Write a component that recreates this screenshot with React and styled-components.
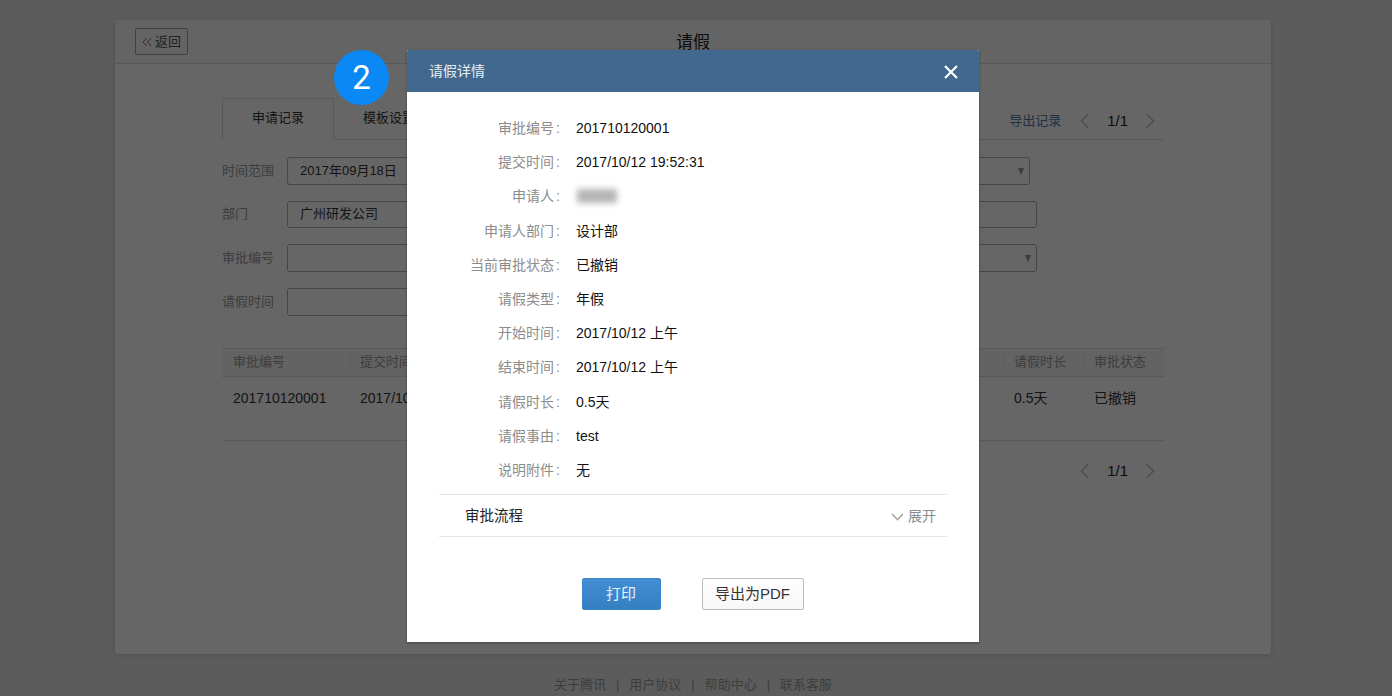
import React from 'react';
import styled, { createGlobalStyle } from 'styled-components';

const GlobalStyle = createGlobalStyle`
    html, body {
        margin: 0;
        height: 100%;
        overflow: hidden;
        background: #e6e6e6;
    }
    body {
        font-family: "Liberation Sans", "Noto Sans CJK SC", sans-serif;
        line-height: 20px;
        color: #333;
    }
    #root { height: 100%; }
`
const Page = styled.div`
    position: relative;
    width: 1392px;
    height: 696px;
    box-sizing: border-box;
    padding: 20px 121px 0 115px;
    overflow: hidden;
`
const Card = styled.div`
    height: 634px;
    background: #fff;
    border-radius: 3px;
    box-shadow: 0 1px 4px rgba(0,0,0,.15);
`
const CardHead = styled.div`
    position: relative;
    display: flex;
    align-items: center;
    justify-content: center;
    height: 43px;
    border-bottom: 1px solid #dcdcdc;
    background: #f9f9f9;
    border-radius: 3px 3px 0 0;
`
const BackButton = styled.div`
    position: absolute;
    left: 20px;
    top: 8px;
    display: flex;
    align-items: center;
    justify-content: center;
    gap: 3px;
    width: 53px;
    height: 27px;
    box-sizing: border-box;
    border: 1px solid #a3a3a3;
    border-radius: 2px;
    font-size: 13px;
    color: #555;
`
const Title = styled.h1`
    margin: 2px 0 0;
    font-size: 17px;
    font-weight: 400;
    color: #222;
`
const Body = styled.div`
    padding: 34px 107px 0;
`
const TabBar = styled.div`
    display: flex;
    align-items: flex-end;
    height: 41px;
    border-bottom: 1px solid #dcdcdc;
`
const Tab = styled.div`
    display: flex;
    align-items: center;
    justify-content: center;
    width: 110px;
    height: 38px;
    padding-bottom: 2px;
    margin-bottom: -1px;
    margin-right: -1px;
    font-size: 13px;
    color: #333;
    border: 1px solid ${p => (p.$active ? '#dcdcdc' : 'transparent')};
    border-bottom: 1px solid ${p => (p.$active ? '#fff' : 'transparent')};
`
const ExportTools = styled.div`
    display: flex;
    align-items: center;
    margin-left: auto;
    height: 41px;
    margin-bottom: -2px;
`
const ExportLink = styled.span`
    font-size: 13px;
    color: #4a7aa8;
    margin-right: 19px;
`
const Pager = styled.div`
    display: flex;
    align-items: center;
    justify-content: flex-end;
    gap: 17px;
    padding-right: 9px;
    color: #222;
    font-size: 15px;
    ${p => p.$bottom && 'margin-top: 20px;'}
`
const FormRows = styled.div`
    display: flex;
    flex-direction: column;
    gap: 16px;
    margin-top: 17px;
`
const FormRow = styled.div`
    display: flex;
    align-items: center;
    height: 27.67px;
`
const FormLabel = styled.label`
    width: 65px;
    font-size: 13px;
    color: #999;
`
const Field = styled.div`
    position: relative;
    display: flex;
    align-items: center;
    box-sizing: border-box;
    width: ${p => p.$w}px;
    height: 27.67px;
    margin-left: ${p => p.$gap || 0}px;
    padding-left: 12px;
    border: 1px solid #b0b0b0;
    border-radius: 3px;
    background: #fff;
    font-size: 13px;
    color: #333;
`
const Caret = styled.i`
    position: absolute;
    right: 5px;
    top: 10px;
    border-left: 3.5px solid transparent;
    border-right: 3.5px solid transparent;
    border-top: 7px solid #999;
`
const TableHead = styled.div`
    display: grid;
    grid-template-columns: 128px 1fr 80px 80px;
    align-items: center;
    height: 27px;
    margin-top: 32px;
    border-top: 1px solid #dedede;
    border-bottom: 1px solid #dedede;
    background: #f7f7f7;
    font-size: 13px;
    color: #999;
`
const HeadCell = styled.div`
    padding-left: 11px;
    line-height: 18px;
    & + & { border-left: 1px solid #e4e4e4; padding-left: 9px; }
`
const TableRow = styled.div`
    display: grid;
    grid-template-columns: 128px 1fr 80px 80px;
    height: 64px;
    box-sizing: border-box;
    padding-top: 12px;
    border-bottom: 1px solid #e0e0e0;
    font-size: 14px;
    color: #333;
`
const RowCell = styled.div`
    padding-left: ${p => p.$pad || 10}px;
    line-height: 18px;
`
const Footer = styled.div`
    display: flex;
    justify-content: center;
    align-items: center;
    gap: 10px;
    margin-top: 21px;
    font-size: 13px;
    color: #999;
`
const Overlay = styled.div`
    position: absolute;
    inset: 0;
    background: rgba(0,0,0,.6);
`
const Modal = styled.div`
    position: absolute;
    left: 407px;
    top: 50px;
    width: 572px;
    height: 592px;
    background: #fff;
    border-radius: 2px 2px 0 0;
    box-shadow: 0 1px 3px rgba(0,0,0,.3);
`
const ModalHead = styled.div`
    display: flex;
    align-items: center;
    justify-content: space-between;
    height: 42px;
    padding: 0 21px 0 22px;
    background: #41698f;
    border-radius: 2px 2px 0 0;
    color: #e6edf3;
    font-size: 14px;
`
const CloseButton = styled.svg`
    display: block;
    margin-top: 1px;
`
const DetailList = styled.dl`
    margin: 19px 0 0;
`
const DetailRow = styled.div`
    display: flex;
    align-items: center;
    height: 34.2px;
    font-size: 14px;
`
const DetailLabel = styled.dt`
    width: 153px;
    text-align: right;
    color: #8c8c8c;
`
const Colon = styled.span`
    margin-left: 2px;
`
const DetailValue = styled.dd`
    margin: 0 0 0 16px;
    color: #111;
`
const BlurName = styled.span`
    display: block;
    width: 40px;
    height: 14px;
    margin-left: 1px;
    background: #b4b4b4;
    filter: blur(3px);
`
const Flow = styled.div`
    display: flex;
    align-items: center;
    justify-content: space-between;
    height: 41px;
    margin: 7px 32px 0;
    padding: 0 11px 0 26px;
    border-top: 1px solid #e6e6e6;
    border-bottom: 1px solid #e6e6e6;
`
const FlowTitle = styled.span`
    font-size: 14.5px;
    color: #222;
`
const FlowToggle = styled.span`
    display: flex;
    align-items: center;
    gap: 4px;
    font-size: 14px;
    color: #8c8c8c;
`
const ToggleIcon = styled.svg`
    margin-top: 3px;
`
const Actions = styled.div`
    display: flex;
    justify-content: center;
    gap: 41px;
    margin-top: 41px;
    padding-right: 1px;
`
const Button = styled.button`
    height: 32px;
    padding: 0;
    font: inherit;
    font-size: 15px;
    border-radius: 2px;
    ${p => (p.$primary
        ? 'width: 79px; color: #e8f1fa; background: linear-gradient(#438ed3, #347fc2); border: 1px solid #3a85ca;'
        : 'width: 102px; color: #333; background: linear-gradient(#fff, #f7f7f7); border: 1px solid #bcbcbc;')}
`
const Badge = styled.div`
    position: absolute;
    left: 334px;
    top: 50px;
    display: flex;
    align-items: center;
    justify-content: center;
    width: 55px;
    height: 55px;
    border-radius: 50%;
    background: #0a88f4;
    color: #fff;
    font-size: 33px;
    font-weight: 400;
    font-family: Roboto, sans-serif;
`

const Chevron = ({ dir }) => (
    <svg width="10" height="16" viewBox="0 0 10 16" fill="none" stroke="#bdbdbd" strokeWidth="1.4">
        <polyline points={dir === 'left' ? '8.5,1 1.5,8 8.5,15' : '1.5,1 8.5,8 1.5,15'} />
    </svg>
)

const details = [
    ['审批编号', '201710120001'],
    ['提交时间', '2017/10/12 19:52:31'],
    ['申请人', null],
    ['申请人部门', '设计部'],
    ['当前审批状态', '已撤销'],
    ['请假类型', '年假'],
    ['开始时间', '2017/10/12 上午'],
    ['结束时间', '2017/10/12 上午'],
    ['请假时长', '0.5天'],
    ['请假事由', 'test'],
    ['说明附件', '无'],
]

export default function App() {
    return (
        <Page>
            <GlobalStyle />
            <Card>
                <CardHead>
                    <BackButton>
                        <svg width="10" height="10" viewBox="0 0 10 10" fill="none" stroke="#777" strokeWidth="1">
                            <polyline points="4.5,1 1,5 4.5,9" />
                            <polyline points="9,1 5.5,5 9,9" />
                        </svg>
                        返回
                    </BackButton>
                    <Title>请假</Title>
                </CardHead>
                <Body>
                    <TabBar>
                        <Tab $active>申请记录</Tab>
                        <Tab>模板设置</Tab>
                        <ExportTools>
                            <ExportLink>导出记录</ExportLink>
                            <Pager>
                                <Chevron dir="left" />
                                <span>1/1</span>
                                <Chevron dir="right" />
                            </Pager>
                        </ExportTools>
                    </TabBar>
                    <FormRows>
                        <FormRow>
                            <FormLabel>时间范围</FormLabel>
                            <Field $w={250}>2017年09月18日</Field>
                            <Field $w={400} $gap={93}><Caret /></Field>
                        </FormRow>
                        <FormRow>
                            <FormLabel>部门</FormLabel>
                            <Field $w={250}>广州研发公司</Field>
                            <Field $w={407} $gap={93} />
                        </FormRow>
                        <FormRow>
                            <FormLabel>审批编号</FormLabel>
                            <Field $w={250} />
                            <Field $w={407} $gap={93}><Caret /></Field>
                        </FormRow>
                        <FormRow>
                            <FormLabel>请假时间</FormLabel>
                            <Field $w={250} />
                        </FormRow>
                    </FormRows>
                    <TableHead>
                        <HeadCell>审批编号</HeadCell>
                        <HeadCell>提交时间</HeadCell>
                        <HeadCell>请假时长</HeadCell>
                        <HeadCell>审批状态</HeadCell>
                    </TableHead>
                    <TableRow>
                        <RowCell $pad={11}>201710120001</RowCell>
                        <RowCell>2017/10/12 19:52:31</RowCell>
                        <RowCell>0.5天</RowCell>
                        <RowCell>已撤销</RowCell>
                    </TableRow>
                    <Pager $bottom>
                        <Chevron dir="left" />
                        <span>1/1</span>
                        <Chevron dir="right" />
                    </Pager>
                </Body>
            </Card>
            <Footer>
                <span>关于腾讯</span><span>|</span>
                <span>用户协议</span><span>|</span>
                <span>帮助中心</span><span>|</span>
                <span>联系客服</span>
            </Footer>
            <Overlay />
            <Badge>2</Badge>
            <Modal>
                <ModalHead>
                    <span>请假详情</span>
                    <CloseButton width="14" height="14" viewBox="0 0 14 14" stroke="#fff" strokeWidth="2.2">
                        <line x1="1" y1="1" x2="13" y2="13" />
                        <line x1="13" y1="1" x2="1" y2="13" />
                    </CloseButton>
                </ModalHead>
                <DetailList>
                    {details.map(([label, value]) => (
                        <DetailRow key={label}>
                            <DetailLabel>{label}<Colon>:</Colon></DetailLabel>
                            <DetailValue>{value === null ? <BlurName /> : value}</DetailValue>
                        </DetailRow>
                    ))}
                </DetailList>
                <Flow>
                    <FlowTitle>审批流程</FlowTitle>
                    <FlowToggle>
                        <ToggleIcon width="13" height="8" viewBox="0 0 13 8" fill="none" stroke="#a8a8a8" strokeWidth="1.6">
                            <polyline points="1,1 6.5,6.5 12,1" />
                        </ToggleIcon>
                        展开
                    </FlowToggle>
                </Flow>
                <Actions>
                    <Button $primary>打印</Button>
                    <Button>导出为PDF</Button>
                </Actions>
            </Modal>
        </Page>
    )
}
